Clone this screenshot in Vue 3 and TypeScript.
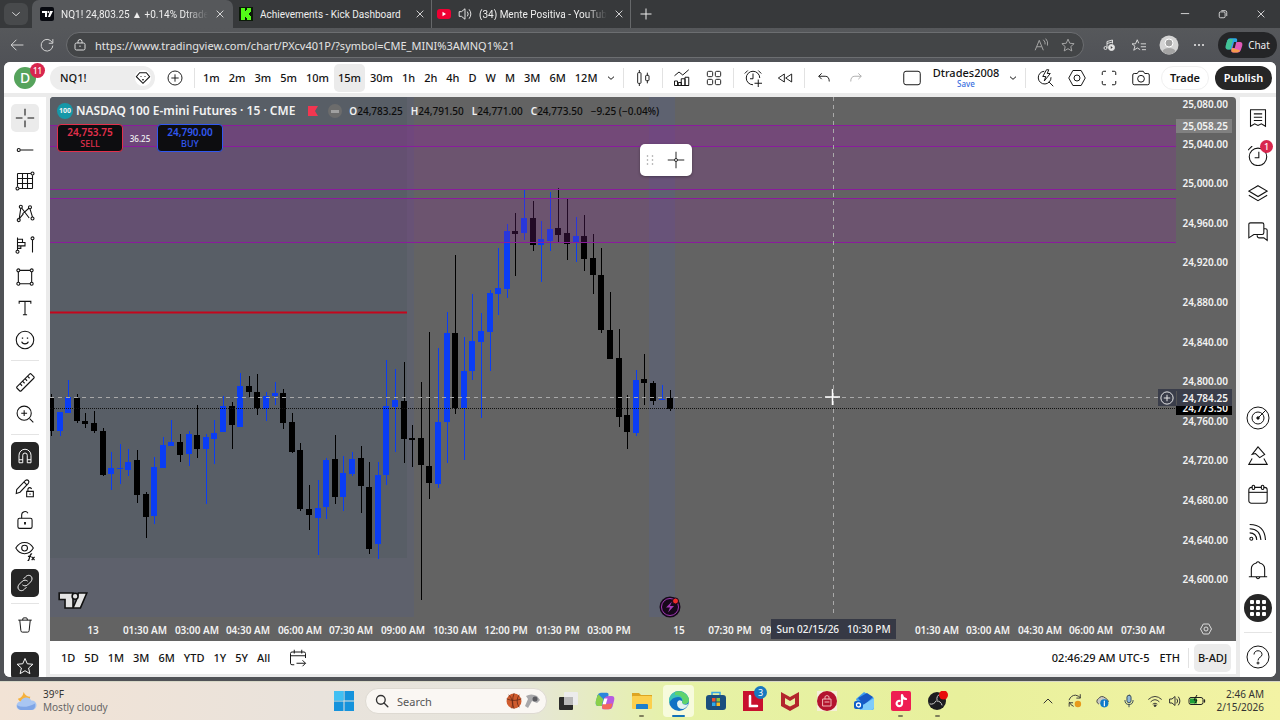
<script setup lang="ts">
type Candle = [number, number, number, number, 0 | 1]

const ORIGIN_X = 50
const ORIGIN_Y = 97
const STEP = 8.6

// wick top, body top, body bottom, wick bottom, rising
const series: Candle[] = [
  [394, 398, 431, 436, 0], [412, 412, 431, 436, 1], [380, 397, 413, 413, 1], [394, 398, 421, 423, 0],
  [413, 421, 424, 428, 0], [411, 423, 431, 433, 0], [428, 431, 475, 476, 0], [452, 468, 474, 490, 1],
  [444, 468, 469, 484, 1], [449, 462, 470, 476, 1], [450, 460, 495, 503, 0], [492, 494, 517, 538, 0],
  [457, 467, 516, 524, 1], [437, 445, 468, 468, 1], [420, 442, 446, 446, 1], [434, 442, 455, 462, 0],
  [431, 434, 454, 466, 1], [405, 435, 449, 458, 0], [434, 437, 449, 504, 1], [420, 433, 439, 464, 1],
  [396, 406, 432, 432, 1], [402, 406, 425, 449, 0], [373, 386, 427, 427, 1], [376, 386, 392, 397, 0],
  [374, 392, 408, 415, 0], [392, 396, 409, 421, 1], [382, 393, 396, 405, 1], [389, 393, 423, 429, 0],
  [413, 422, 452, 453, 0], [443, 450, 509, 511, 0], [485, 509, 515, 530, 0], [480, 508, 518, 555, 1],
  [458, 460, 507, 519, 1], [435, 459, 497, 504, 0], [456, 473, 497, 511, 1], [452, 459, 474, 476, 1],
  [446, 458, 486, 513, 0], [462, 487, 549, 554, 0], [462, 475, 544, 559, 1], [360, 406, 475, 485, 1],
  [369, 400, 407, 452, 1], [362, 401, 439, 463, 0], [425, 438, 440, 467, 0], [382, 438, 465, 600, 0],
  [332, 466, 483, 499, 0], [348, 422, 484, 488, 1], [312, 333, 422, 463, 1], [255, 333, 408, 414, 0],
  [337, 371, 408, 460, 1], [294, 341, 371, 380, 1], [313, 331, 342, 418, 1], [290, 293, 332, 371, 1],
  [248, 288, 294, 315, 1], [224, 231, 289, 298, 1], [213, 231, 234, 276, 0], [189, 218, 233, 240, 1],
  [201, 218, 245, 251, 0], [221, 239, 245, 282, 1], [192, 229, 241, 251, 1], [188, 228, 235, 243, 0],
  [199, 233, 244, 260, 0], [217, 236, 242, 262, 1], [215, 236, 259, 271, 0], [234, 258, 275, 294, 0],
  [248, 275, 330, 333, 0], [292, 330, 359, 359, 0], [329, 358, 417, 427, 0], [395, 415, 432, 449, 0],
  [370, 380, 433, 436, 1], [354, 379, 383, 405, 0], [381, 383, 401, 405, 0], [385, 399, 400, 400, 1],
  [390, 398, 409, 411, 0],
]
const candles = series.map(([wt, bt, bb, wb, up], i) => ({
  x: Math.round(51 + STEP * i) - ORIGIN_X,
  wt: wt - ORIGIN_Y,
  wh: wb - wt,
  bt: bt - ORIGIN_Y,
  bh: bb - bt,
  fill: up ? '#0a3df5' : '#000',
}))

const prices = ['25,080.00', '25,040.00', '25,000.00', '24,960.00', '24,920.00', '24,880.00', '24,840.00',
  '24,800.00', '24,760.00', '24,720.00', '24,680.00', '24,640.00', '24,600.00']
  .map((text, i) => ({ text, y: Math.round(11 + 39.6 * i) }))

const spread = (start: number, labels: string[]) =>
  labels.map((text, i) => ({ text, x: Math.round(start + 51.6 * i) - ORIGIN_X }))
const times = [
  ...spread(93.4, ['13', '01:30 AM', '03:00 AM', '04:30 AM', '06:00 AM', '07:30 AM', '09:00 AM', '10:30 AM',
    '12:00 PM', '01:30 PM', '03:00 PM']),
  ...spread(678.5, ['15', '07:30 PM', '09:00 PM']),
  ...spread(936.5, ['01:30 AM', '03:00 AM', '04:30 AM', '06:00 AM', '07:30 AM']),
]

const intervals = ['1m', '2m', '3m', '5m', '10m', '15m', '30m', '1h', '2h', '4h', 'D', 'W', 'M', '3M', '6M', '12M']
const ranges = ['1D', '5D', '1M', '3M', '6M', 'YTD', '1Y', '5Y', 'All']

// Stroke icons on a 24 unit grid
const icons: Record<string, string> = {
  cross: '<path d="M12 1v8M12 15v8M1 12h8M15 12h8"/>',
  trend: '<circle cx="4.500" cy="12" r="1.800"/><path d="M6.500 12H22"/>',
  fib: '<path d="M3 3h16M3 3v16M21 5v16M5 21h16M3 9h18M3 15h18M9 3v18M15 3v18"/><circle cx="21" cy="3" r="1.800"/><circle cx="3" cy="21" r="1.800"/>',
  pattern: '<path d="M5 19L7 6M8 6l9 12M9 13l8-7M18 7l3 10M5 19l5-6"/><circle cx="7" cy="4.500" r="1.800"/><circle cx="18" cy="5" r="1.800"/><circle cx="4.500" cy="20.500" r="1.800"/><circle cx="21" cy="18.500" r="1.800"/>',
  forecast: '<path d="M3 3v15M3 5h6v4H3M3 9h9v4H3M3 13h4v3H3M21 6v15"/><circle cx="3" cy="20" r="1.800"/><circle cx="21" cy="4" r="1.800"/>',
  shape: '<path d="M6 4h12M6 20h12M4 6v12M20 6v12"/><circle cx="4" cy="4" r="1.800"/><circle cx="20" cy="4" r="1.800"/><circle cx="4" cy="20" r="1.800"/><circle cx="20" cy="20" r="1.800"/>',
  text: '<path d="M5 7V4h14v3M12 4v16M9.500 20h5"/>',
  smile: '<circle cx="12" cy="12" r="10.500"/><path d="M8 14c1 3.500 7 3.500 8 0"/><path d="M9 9v1.500M15 9v1.500" stroke-width="1.600"/>',
  ruler: '<path d="M2.500 17.500l15-15q1-1 2 0l3 3q1 1 0 2l-15 15q-1 1-2 0l-3-3q-1-1 0-2zM6 14l2.500 2.500M9 11l2.500 2.500M12 8l2.500 2.500M15 5l2.500 2.500"/>',
  zoomin: '<circle cx="11" cy="11" r="8.500"/><path d="M17.500 17.500L22 22M11 7.500v7M7.500 11h7"/>',
  magnet: '<path d="M4 21V11a8 8 0 0 1 16 0v10h-5V11a3 3 0 0 0-6 0v10zM4 17h5M15 17h5"/>',
  pencilLock: '<path d="M2 14L12.500 3q2-1.500 3.500 0t0 3.500L6 17l-4.500 1.500zM11 5l3.500 3.500M14 16h8v6.500h-8zM15.500 16v-3q2-3 4.500 0M18 18.500v1.500"/>',
  lock: '<rect x="3.500" y="10" width="17" height="12" rx="2"/><path d="M8 10V6a4 4 0 0 1 7.500-2"/><path d="M12 14.500v3" stroke-width="2.200"/>',
  eye: '<path d="M1 8.500C6-.5 17-.5 22 8.500 17 17.500 6 17.500 1 8.500z"/><circle cx="11.500" cy="8.500" r="3.500"/><path d="M15 23.500c3 1 2-9 5.500-8M15.500 18.500h4M20 19l3.500 4M23.500 19L20 23" stroke-width="1.500"/>',
  link: '<path d="M10 6.500l3-3c3-3 6.500-1.500 7.500 0 1.500 2 1 5-1 7l-4 4c-2.500 2-5 1.500-7 0M14 17.500l-3 3c-3 3-6.500 1.500-7.500 0-1.500-2-1-5 1-7l4-4c2.500-2 5-1.500 7 0"/>',
  trash: '<path d="M3 5.500h18M5 5.500l1.500 14q.200 2 2 2h7q1.800 0 2-2l1.500-14M9 5.500V4q0-1.500 1.500-1.500h3Q15 2.500 15 4v1.500"/>',
  star: '<path d="M12 2l3 7 7.500.700-5.700 5 1.700 7.500L12 18.300l-6.500 3.900 1.700-7.500-5.700-5L9 9z"/>',
  list: '<path d="M3 2h18v20l-5-3-4 2-4-2-5 3zM7 7h10M7 11h10M7 15h10"/>',
  alarm: '<circle cx="12" cy="13" r="10.500"/><path d="M13 7v7H8M0 5l5-5"/>',
  layers: '<path d="M12 2l11 6.500L12 15 1 8.500zM1 13.500L12 20l11-6.500"/>',
  chat: '<path d="M3 1h14q2 0 2 2v10q0 2-2 2H7l-6 4V3q0-2 2-2zM19 8h2q2 0 2 2v12l-4-3h-6q-2 0-2-3"/>',
  target: '<circle cx="12" cy="12" r="11"/><circle cx="12" cy="12" r="6"/><path d="M12 12L20 4"/><circle cx="12" cy="12" r="1.200" fill="currentColor"/>',
  ideas: '<path d="M12 1L5 10l4-1 5 5 6-4zM5 15l-4 7h22l-4-7"/>',
  calendar: '<rect x="1" y="4" width="22" height="19" rx="3"/><path d="M1 10h22"/><rect x="5" y="1.500" width="3" height="5" rx="1.500" fill="#fff"/><rect x="16" y="1.500" width="3" height="5" rx="1.500" fill="#fff"/>',
  feed: '<circle cx="4" cy="20" r="1.800"/><path d="M2 13q8 0 8.500 8.500M2 8q12.500 0 13.500 13.500M2 3q18 0 19 18.500"/>',
  bell: '<path d="M1 20h22M4 20V11a8 7.500 0 0 1 6-7.500q2-3 4 0a8 7.500 0 0 1 6 7.500v9M9.500 20q2.500 5 5 0"/>',
  help: '<circle cx="12" cy="12" r="11"/><path d="M8 9.500c0-5 8-5 8 0 0 3-4 2.500-4 6"/><circle cx="12" cy="18" r="1"/>',
  plusCircle: '<circle cx="12" cy="12" r="10.500"/><path d="M12 6.500v11M6.500 12h11"/>',
  gem: '<path d="M7 4h10l5 6-10 10L2 10z"/><path d="M9 9v1M15 9v1M11 14l1 1 1-1" stroke-width="1.800"/>',
  candles: '<rect x="4" y="4" width="5" height="16" rx="1"/><rect x="16" y="8" width="5" height="8" rx="1"/><path d="M6.500 0v4M6.500 20v4M18.500 4v4M18.500 16v4"/>',
  indicators: '<path d="M2 9l6-5 5 4 8-7M2 22v-6h4v6M7 22v-4h4v4M11 22v-9h5v9M16 22V11h5v11zM2 22h19"/>',
  grid4: '<rect x="2" y="2" width="8" height="8" rx="2"/><rect x="14" y="2" width="8" height="8" rx="2"/><rect x="2" y="14" width="8" height="8" rx="2"/><rect x="14" y="14" width="8" height="8" rx="2"/>',
  alertAdd: '<path d="M21 12a9 9 0 1 0-9 9M12 6v7H8M1 6l4-4M19 2l4 4M19 14v10M14 19h10"/>',
  rewind: '<path d="M11 6v12l-9-6zM22 6v12l-9-6z"/>',
  undo: '<path d="M8 4L3 9l5 5M3 9h11q7 0 7 9"/>',
  redo: '<path d="M16 4l5 5-5 5M21 9H10q-7 0-7 9"/>',
  square: '<rect x="1" y="3" width="22" height="18" rx="3"/>',
  quick: '<path d="M11 3a8.500 8.500 0 1 0 9 8M17 17l6 6M14 1l-5 9h4l-2 6 8-10h-4l2-5z"/>',
  hex: '<path d="M6.500 2h11L23 12l-5.500 10h-11L1 12z"/><circle cx="12" cy="12" r="4"/>',
  full: '<path d="M3 8V5q0-2 2-2h3M16 3h3q2 0 2 2v3M21 16v3q0 2-2 2h-3M8 21H5q-2 0-2-2v-3"/>',
  camera: '<path d="M3 6h4l2-3h6l2 3h4q2 0 2 2v11q0 2-2 2H3q-2 0-2-2V8q0-2 2-2z"/><circle cx="12" cy="13" r="4.500"/>',
  chev: '<path d="M3 8l9 8 9-8"/>',
  chevUp: '<path d="M4 16l8-8 8 8"/>',
  goto: '<path d="M7 21H4q-2 0-2-2V6q0-2 2-2h16q2 0 2 2v6M2 9h20M7 1v5M17 1v5M10 19h12M18 15l4 4-4 4"/>',
  close: '<path d="M4 4l16 16M20 4L4 20"/>',
  plus: '<path d="M12 1v22M1 12h22"/>',
  min: '<path d="M2 11h20"/>',
  restore: '<rect x="3" y="7" width="14" height="14" rx="3"/><path d="M8 4h9q4 0 4 4v9"/>',
  back: '<path d="M23 12H2M11 3l-9 9 9 9"/>',
  reload: '<path d="M21 8A10 10 0 1 0 22 13M22 2v7h-7"/>',
  bagLock: '<rect x="2" y="8" width="20" height="14" rx="3"/><path d="M8 8V5a4 4 0 0 1 8 0v3M12 13v3"/>',
  speaker: '<path d="M2 8h4l6-5v18l-6-5H2zM16 8q3 4 0 8M19 4q6 8 0 16"/>',
  starLines: '<path d="M14 20l-5-3-6 4 2-7-5-4h6l3-7 2.500 6M15 10h9M15 15h9M17 20h7"/>',
  music: '<path d="M8 18V5l11-3v7M8 9l11-3"/><circle cx="5" cy="18" r="3"/><circle cx="17" cy="17" r="6" fill="#e8e8e8"/><path d="M15.500 14l4 3-4 3z" fill="#444" stroke="none"/>',
  readAloud: '<path d="M2 21L9 4l7 17M5 15h8M16 3q4 4 3 8M20 1q5 5 3 12"/>',
  search: '<circle cx="10" cy="10" r="7.500"/><path d="M15.500 15.500L22 22"/>',
  mic: '<rect x="8.500" y="2" width="7" height="13" rx="3.500" fill="#8fb8d8"/><path d="M5 11q0 7 7 7t7-7M12 18v4"/>',
  wifi: '<path d="M1 9q11-10 22 0M5 13q7-7 14 0M8.500 17q3.500-3 7 0"/><circle cx="12" cy="20" r="1.500" fill="currentColor"/>',
}

const leftGroups = [
  ['cross', 'trend', 'fib', 'pattern', 'forecast', 'shape', 'text', 'smile'],
  ['ruler', 'zoomin'],
  ['magnet', 'pencilLock', 'lock', 'eye', 'link'],
  ['trash'],
]
const dark = ['magnet', 'link']
const rightTop = ['list', 'alarm', 'layers', 'chat']
const rightBottom = ['target', 'ideas', 'calendar', 'feed', 'bell']
</script>

<template>
  <div class="screen">
    <header class="tabs">
      <button class="tab-menu" aria-label="Tab actions"><svg class="i10" viewBox="0 0 24 24" v-html="icons.chev"></svg></button>
      <div class="tab active">
        <svg class="fav" viewBox="0 0 14 14"><rect width="14" height="14" rx="2" fill="#080a10" /><path d="M2 4h5v6H5V6H2zM10 4h3l-3 6H8z" fill="#fff" /><circle cx="8.300" cy="5" r="1" fill="#fff" /></svg>
        <span class="tab-title">NQ1! 24,803.25 ▲ +0.14% Dtrade</span>
        <button class="x" aria-label="Close tab"><svg class="i10" viewBox="0 0 24 24" v-html="icons.close"></svg></button>
      </div>
      <div class="tab second">
        <svg class="fav" viewBox="0 0 14 14"><rect width="14" height="14" fill="#0b1a08" /><path d="M2 1h4v3h1V3h1V1h4v4h-1v1h-1v2h1v1h1v4H8v-2H7v-1H6v3H2z" fill="#53fc18" /></svg>
        <span class="tab-title">Achievements - Kick Dashboard</span>
        <button class="x" aria-label="Close tab"><svg class="i10" viewBox="0 0 24 24" v-html="icons.close"></svg></button>
      </div>
      <div class="tab third">
        <svg class="fav" viewBox="0 0 14 14"><rect y="2" width="14" height="10" rx="3" fill="#f00033" /><path d="M5.500 4.800v4.400l3.500-2.200z" fill="#fff" /></svg>
        <svg class="i14" viewBox="0 0 24 24" v-html="icons.speaker"></svg>
        <span class="tab-title">(34) Mente Positiva - YouTub</span>
        <button class="x" aria-label="Close tab"><svg class="i10" viewBox="0 0 24 24" v-html="icons.close"></svg></button>
      </div>
      <button class="new-tab" aria-label="New tab"><svg class="i12" viewBox="0 0 24 24" v-html="icons.plus"></svg></button>
      <div class="grow"></div>
      <button v-for="w in ['min', 'restore', 'close']" :key="w" class="win" :aria-label="w"><svg class="i10" viewBox="0 0 24 24" v-html="icons[w]"></svg></button>
    </header>

    <div class="address">
      <button class="nav" aria-label="Back"><svg class="i14" viewBox="0 0 24 24" v-html="icons.back"></svg></button>
      <button class="nav" aria-label="Reload"><svg class="i14" viewBox="0 0 24 24" v-html="icons.reload"></svg></button>
      <div class="url">
        <svg class="i12" viewBox="0 0 24 24" v-html="icons.bagLock"></svg>
        <input type="text" aria-label="Address" value="https://www.tradingview.com/chart/PXcv401P/?symbol=CME_MINI%3AMNQ1%21" />
        <svg class="i14 dim" viewBox="0 0 24 24" v-html="icons.readAloud"></svg>
        <svg class="i14 dim" viewBox="0 0 24 24" v-html="icons.star"></svg>
      </div>
      <button class="ext" aria-label="Media"><svg class="i12" viewBox="0 0 24 24" v-html="icons.music"></svg></button>
      <button class="ext" aria-label="Favorites"><svg class="i14" viewBox="0 0 24 24" v-html="icons.starLines"></svg></button>
      <button class="ext" aria-label="Profile"><svg class="i20" viewBox="0 0 20 20"><circle cx="10" cy="10" r="9.500" fill="#d4d4d4" stroke="none" /><circle cx="10" cy="8" r="4" fill="#a4a4a4" stroke="#fff" stroke-width="1" /><path d="M3.500 16c2-4 11-4 13 0-3 4.500-10 4.500-13 0z" fill="#a4a4a4" stroke="none" /></svg></button>
      <button class="ext" aria-label="More"><svg class="i12" viewBox="0 0 12 12"><circle cx="2" cy="6" r="1" fill="#eee" stroke="none" /><circle cx="6" cy="6" r="1" fill="#eee" stroke="none" /><circle cx="10" cy="6" r="1" fill="#eee" stroke="none" /></svg></button>
      <button class="copilot">
        <svg class="i18" viewBox="0 0 24 24"><g stroke="none"><path d="M7 3h7q3 0 2 4l-3 8q-1 3-5 3H4q-4 0-3-5l2-7q1-3 4-3z" fill="#2aa7e8" /><path d="M5 4q-2 1-3 5l-1 4q-1 5 3 5h3l4-14z" fill="#4fcf72" opacity=".7" /><path d="M17 8h3q4 0 3 5l-2 6q-1 3-4 3h-6q-4 0-2-5l2-6q1-3 6-3z" fill="#e05ab8" /><path d="M9 16q-2 6 3 6h4q3 0 4-3z" fill="#f79a4c" /><path d="M12 8h3l-2 8h-3z" fill="#242527" /></g></svg>
        Chat
      </button>
    </div>

    <main class="app">
      <div class="topbar">
        <button class="avatar" aria-label="Account, 11 notifications">D<span class="badge">11</span></button>
        <button class="symbol">NQ1!<svg class="i14 gem" viewBox="0 0 24 24" v-html="icons.gem"></svg></button>
        <button class="tool add" aria-label="Compare"><svg class="i16" viewBox="0 0 24 24" v-html="icons.plusCircle"></svg></button>
        <span class="sep"></span>
        <div class="intervals">
          <button v-for="t in intervals" :key="t" :class="{ on: t === '15m' }">{{ t }}</button>
        </div>
        <button class="narrow" aria-label="More intervals"><svg class="i8" viewBox="0 0 24 24" v-html="icons.chev"></svg></button>
        <span class="sep"></span>
        <button class="tool" aria-label="Candles"><svg class="i16" viewBox="0 0 24 24" v-html="icons.candles"></svg></button>
        <span class="sep"></span>
        <button class="tool" aria-label="Indicators"><svg class="i18" viewBox="0 0 24 24" v-html="icons.indicators"></svg></button>
        <button class="tool" aria-label="Templates"><svg class="i16" viewBox="0 0 24 24" v-html="icons.grid4"></svg></button>
        <span class="sep"></span>
        <button class="tool" aria-label="Create alert"><svg class="i18" viewBox="0 0 24 24" v-html="icons.alertAdd"></svg></button>
        <button class="tool" aria-label="Replay"><svg class="i16" viewBox="0 0 24 24" v-html="icons.rewind"></svg></button>
        <span class="sep"></span>
        <button class="tool" aria-label="Undo"><svg class="i14" viewBox="0 0 24 24" v-html="icons.undo"></svg></button>
        <button class="tool faded" aria-label="Redo"><svg class="i14" viewBox="0 0 24 24" v-html="icons.redo"></svg></button>
        <div class="grow"></div>
        <button class="tool" aria-label="Layout"><svg class="i18" viewBox="0 0 24 24" v-html="icons.square"></svg></button>
        <div class="layout-name"><span>Dtrades2008</span><button class="save">Save</button></div>
        <button class="narrow" aria-label="Manage layouts"><svg class="i8" viewBox="0 0 24 24" v-html="icons.chev"></svg></button>
        <span class="sep"></span>
        <button v-for="n in ['quick', 'hex', 'full', 'camera']" :key="n" class="tool" :aria-label="n"><svg class="i18" viewBox="0 0 24 24" v-html="icons[n]"></svg></button>
        <button class="trade">Trade</button>
        <button class="publish">Publish</button>
      </div>

      <div class="work">
        <nav class="left">
          <template v-for="(g, gi) in leftGroups" :key="gi">
            <div class="lgroup" :class="'g' + gi">
              <button v-for="n in g" :key="n" :aria-label="n" :class="{ sel: n === 'cross', dark: dark.includes(n) }"><svg :class="n === 'magnet' || n === 'link' || n === 'trash' ? 'i18' : 'i20'" viewBox="0 0 24 24" v-html="icons[n]"></svg></button>
            </div>
            <hr v-if="gi < 3" />
          </template>
          <button class="dark starred" aria-label="Favorite tools"><svg class="i18" viewBox="0 0 24 24" v-html="icons.star"></svg></button>
        </nav>

        <section class="center">
          <div class="chart">
            <svg class="pane" role="img" aria-label="NASDAQ 100 E-mini Futures candles">
              <rect width="364" height="521" fill="#5e616c" />
              <rect width="357" height="461" fill="#585e66" />
              <rect x="599" width="26" height="521" fill="#5e6270" />
              <path d="M0 215.500H357" stroke="#c4061c" stroke-width="2" />
              <g v-for="(c, i) in candles" :key="i" :fill="c.fill">
                <rect :x="c.x" :y="c.wt" width="1" :height="c.wh" />
                <rect :x="c.x - 3" :y="c.bt" width="6" :height="c.bh" />
              </g>
              <g class="zones">
                <rect width="100%" y="29" height="21" />
                <rect width="100%" y="29" height="63" />
                <rect width="100%" y="102" height="43" />
              </g>
              <g class="levels">
                <line v-for="y in [28.5, 49.5, 92.5, 101.5, 145.5]" :key="y" x1="0" x2="100%" :y1="y" :y2="y" />
              </g>
              <line x1="0" x2="100%" y1="311.500" y2="311.500" stroke="#111" stroke-dasharray="1 1" />
              <line x1="0" x2="100%" y1="300.500" y2="300.500" stroke="#a9a9a9" stroke-dasharray="4 4" />
              <line x1="783.500" x2="783.500" y1="0" y2="100%" stroke="#a9a9a9" stroke-dasharray="4 4" />
              <path d="M782.500 292v16M775 300h15" stroke="#fff" stroke-width="1.500" />
            </svg>
            <svg class="prices">
              <rect y="22" width="56" height="14" fill="#808080" />
              <text v-for="p in prices" :key="p.text" x="52" :y="p.y" text-anchor="end">{{ p.text }}</text>
              <text x="52" y="33" text-anchor="end">25,058.25</text>
              <rect y="304" width="56" height="14" fill="#000" />
              <text x="52" y="315" text-anchor="end">24,773.50</text>
            </svg>
            <svg class="times">
              <text v-for="(t, i) in times" :key="i" :x="t.x" y="17" text-anchor="middle">{{ t.text }}</text>
            </svg>
            <button class="axis-set" aria-label="Axis settings"><svg class="i12" viewBox="0 0 24 24" v-html="icons.hex"></svg></button>

            <div class="cross-price"><button aria-label="Add at price"><svg class="i14" viewBox="0 0 24 24" v-html="icons.plusCircle"></svg></button><span>24,784.25</span></div>
            <div class="cross-time"><span>Sun 02/15/26</span><span>10:30 PM</span></div>

            <div class="legend">
              <span class="hundred">100</span>
              <h1>NASDAQ 100 E-mini Futures · 15 · CME</h1>
              <svg class="flag" viewBox="0 0 10 10"><path d="M0 0h10L7 5l3 5H0z" fill="#f23650" stroke="none" /></svg>
              <span class="dash"></span>
              <p class="ohlc">
                <span><b>O</b>24,783.25</span><span><b>H</b>24,791.50</span><span><b>L</b>24,771.00</span><span><b>C</b>24,773.50</span><span>−9.25 (−0.04%)</span>
              </p>
            </div>
            <div class="quotes">
              <button class="sell"><strong>24,753.75</strong>SELL</button>
              <span>36.25</span>
              <button class="buy"><strong>24,790.00</strong>BUY</button>
            </div>
            <div class="floating">
              <svg class="grip" viewBox="0 0 8 12"><g fill="#999" stroke="none"><circle v-for="k in 6" :key="k" :cx="k % 2 ? 1.5 : 6.5" :cy="Math.ceil(k / 2) * 4 - 2" r="0.800" /></g></svg>
              <button aria-label="Cross tool"><svg class="i18" viewBox="0 0 24 24"><path d="M12 1v9M12 14v9M1 12h9M14 12h9" /><circle cx="12" cy="12" r="2" /></svg></button>
            </div>
            <svg class="tv" viewBox="0 0 28 16"><path d="M1 1h13v14H6.500V7H1zM19 1h8l-6 14h-7l3-7z" fill="#e4e4e4" stroke="#111" stroke-width="1.500" /><circle cx="16" cy="4" r="2.800" fill="#e4e4e4" stroke="#111" stroke-width="1.500" /></svg>
            <svg class="bolt" viewBox="0 0 22 22"><circle cx="11" cy="11" r="9" fill="#16081a" stroke="#16081a" stroke-width="3" /><circle cx="11" cy="11" r="8.500" stroke="#a03ab4" stroke-width="1" /><path d="M13 5.500l-6 6h4l-2 5 6-6.500h-4z" fill="#a03ab4" stroke="none" /><circle cx="16.500" cy="5" r="3" fill="#ee2b2b" stroke="#16081a" stroke-width="1" /></svg>
          </div>

          <div class="bottombar">
            <button v-for="r in ranges" :key="r" class="range">{{ r }}</button>
            <button class="goto" aria-label="Go to date"><svg class="i18" viewBox="0 0 24 24" v-html="icons.goto"></svg></button>
            <div class="grow"></div>
            <button class="clock">02:46:29 AM UTC-5</button>
            <button class="eth">ETH</button>
            <span class="sep"></span>
            <button class="badj">B-ADJ</button>
          </div>
        </section>

        <aside class="right">
          <button v-for="n in rightTop" :key="n" :aria-label="n"><svg class="i20" viewBox="0 0 24 24" v-html="icons[n]"></svg><span v-if="n === 'alarm'" class="one">1</span></button>
          <div class="grow"></div>
          <button v-for="n in rightBottom" :key="n" :aria-label="n"><svg :class="n === 'target' ? 'i24' : 'i20'" viewBox="0 0 24 24" v-html="icons[n]"></svg></button>
          <button class="apps" aria-label="Products"><svg class="i16" viewBox="0 0 16 16"><rect v-for="k in 9" :key="k" :x="((k - 1) % 3) * 6" :y="Math.floor((k - 1) / 3) * 6" width="4" height="4" rx="1" fill="#fff" stroke="none" /></svg></button>
          <hr />
          <button aria-label="Help"><svg class="i24" viewBox="0 0 24 24" v-html="icons.help"></svg></button>
        </aside>
      </div>
    </main>

    <footer class="taskbar">
      <button class="weather">
        <svg class="sky" viewBox="0 0 22 22"><path d="M8 1q2 5 7 5-1 6-7 6-5-1-6-4 5-1 6-7z" fill="#f6b13c" /><path d="M5 20a4.500 4.500 0 0 1 0-9 6 6 0 0 1 11-1 5 5 0 0 1 1 10z" fill="#a9c6f2" /><path d="M5 20q-4-1-4-5 8 4 19-2 1 6-4 7z" fill="#7fa5e6" /></svg>
        <span>39°F<small>Mostly cloudy</small></span>
      </button>
      <div class="dock">
        <button class="start" aria-label="Start"><svg viewBox="0 0 20 20"><path d="M0 0h9.500v9.500H0zM10.500 0H20v9.500h-9.500zM0 10.500h9.500V20H0zM10.500 10.500H20V20h-9.500z" fill="#1593dc" /><path d="M0 0h9.500v9.500H0z" fill="#41c0f3" /></svg></button>
        <div class="search">
          <svg class="i14" viewBox="0 0 24 24" v-html="icons.search"></svg>
          <input type="text" placeholder="Search" aria-label="Search" />
          <svg class="ball" viewBox="0 0 34 16"><circle cx="8" cy="8" r="7.500" fill="#cf5c2e" /><path d="M1 6q7 3 14 0M8 .500q-3 8 0 15M3 2q5 5 3 13M13 2q-4 6 0 12" fill="none" stroke="#5a2414" stroke-width=".7" /><path d="M20 3q5-3 11 0l3 4-3 3-5-2-4 7-3-2 3-7z" fill="#a8a8aa" /><circle cx="29" cy="6" r="2.500" fill="#5b5b60" /></svg>
        </div>
        <button class="dk" aria-label="Task view"><svg viewBox="0 0 20 20"><rect x="1" y="6" width="14" height="13" rx="1" fill="#2b2b2b" /><rect x="6" y="1" width="14" height="13" rx="1" fill="#ececec" /><rect x="6" y="6" width="9" height="8" fill="#b9b9b9" /></svg></button>
        <button class="dk" aria-label="Copilot"><svg viewBox="0 0 24 24"><path d="M7 2h7q3 0 2 4l-3 9q-1 3-5 3H4q-4 0-3-5l2-8q1-3 4-3z" fill="#2b86dd" /><path d="M4 4Q2 7 1 12q-1 6 3 6h4l2-8z" fill="#8ad04a" /><path d="M17 6h3q4 0 3 5l-2 8q-1 3-4 3h-6q-4 0-2-5l2-8q1-3 6-3z" fill="#b75be0" /><path d="M9 16q-2 6 3 6h4q3 0 4-3l1-4z" fill="#f4695d" /><path d="M11 9h4l-2 7H9z" fill="#fff" /></svg></button>
        <button class="dk run" aria-label="File Explorer"><svg viewBox="0 0 20 20"><path d="M0 2h7l2 2h11v4H0z" fill="#dda522" /><rect y="5" width="20" height="13" rx="1" fill="#fbcf4d" /><path d="M4 18v-4q0-1 1-1h10q1 0 1 1v4z" fill="#1c7fcb" /></svg></button>
        <button class="dk open" aria-label="Edge"><svg viewBox="0 0 20 20"><circle cx="10" cy="10" r="10" fill="#1272c4" /><path d="M0 9C1-2 17-3 20 8c0 6-6 6-7 4 1-3 0-6-4-6S2 8 0 12z" fill="#3fc4b4" /><path d="M6 1Q15-2 20 8c0 6-6 6-7 4 2-5-1-8-7-8z" fill="#60d36c" /><path d="M13 12q2 3 6.500 1-2 4-5.500 5-6 0-6-6 1-4 5-2z" fill="#e4f3f0" /></svg></button>
        <button class="dk" aria-label="Store"><svg viewBox="0 0 20 20"><path d="M6 5V1.500h8V5" fill="none" stroke="#38a8e4" stroke-width="1.500" /><rect y="4" width="20" height="15" rx="3" fill="#1b4f7e" /><path d="M6 7h3.500v3.500H6z" fill="#f05030" /><path d="M10.500 7H14v3.500h-3.500z" fill="#8cc63f" /><path d="M6 11.500h3.500V15H6z" fill="#2ea8ea" /><path d="M10.500 11.500H14V15h-3.500z" fill="#fdbb21" /></svg></button>
        <button class="dk" aria-label="L app, 3 notifications"><svg viewBox="0 0 20 20"><rect width="20" height="20" fill="#c8102e" /><path d="M7 5v10h7" fill="none" stroke="#fff" stroke-width="2.500" /></svg><span class="three">3</span></button>
        <button class="dk" aria-label="McAfee"><svg viewBox="0 0 20 20"><path d="M1 1l9 5 9-5v14l-9 5-9-5zM5 7v6l5 2.500 5-2.500V7l-5 3z" fill="#b3262c" fill-rule="evenodd" /></svg></button>
        <button class="dk" aria-label="Shopping"><svg viewBox="0 0 20 20"><rect width="20" height="20" fill="#f5efd8" /><circle cx="10" cy="10" r="10" fill="#b3132e" /><path d="M6 8h8v7H6zM8 8V5.500q2-2 4 0V8M8 11h4" fill="none" stroke="#f0b8b8" stroke-width="1" /></svg></button>
        <button class="dk" aria-label="Outlook"><svg viewBox="0 0 20 20"><path d="M2 8l8-7 10 6v10q0 2-3 2H6z" fill="#3f9ff0" /><path d="M4 7l9-5 6 4-9 8z" fill="#1858c4" /><path d="M9 14l11-7v9q0 3-3 3H6z" fill="#7ecbfa" /><rect y="10" width="9" height="8" rx="2" fill="#0f5fc8" /><circle cx="4.500" cy="14" r="2" fill="none" stroke="#fff" stroke-width="1.300" /></svg></button>
        <button class="dk run" aria-label="TikTok"><svg viewBox="0 0 20 20"><rect width="20" height="20" rx="2" fill="#ee1d52" /><path d="M11 4v8.500a2.700 2.700 0 1 1-2.500-2.700M11 4q.500 3.500 4 4" fill="none" stroke="#fff" stroke-width="2.200" /></svg></button>
        <button class="dk run" aria-label="OBS"><svg viewBox="0 0 20 20"><circle cx="9" cy="10" r="9" fill="#1c1c20" /><path d="M9 9q-1-4 3-6M9 10q4 0 5 4M8 10q-2 4-6 3" fill="none" stroke="#ccc" stroke-width="1" /><circle cx="15.500" cy="4" r="4.500" fill="#e80c0c" /></svg></button>
      </div>
      <div class="tray">
        <button aria-label="Hidden icons"><svg class="i12" viewBox="0 0 24 24" v-html="icons.chevUp"></svg></button>
        <button aria-label="Sync"><svg class="i14" viewBox="0 0 24 24"><path d="M2 10q3-8 11-8 5 1 8 4M21 1v6h-6M2 14q2 5 7 7M2 21v-6h6" /><circle cx="17" cy="17" r="5.500" fill="#e79a1c" stroke="none" /></svg></button>
        <button aria-label="OneDrive"><svg class="i14" viewBox="0 0 24 24"><path d="M6 17a5 5 0 0 1 0-9q5-7 12-1 5 3 5 6" fill="#c8c8c0" stroke="#444" /><circle cx="16" cy="16" r="7" fill="#0f7ac8" stroke="none" /><path d="M16 15v5M16 12v1.500" stroke="#fff" stroke-width="2" /></svg></button>
        <button aria-label="Microphone" class="mic"><svg class="i14" viewBox="0 0 24 24" v-html="icons.mic"></svg></button>
        <button class="system" aria-label="Network, volume and battery">
          <svg class="i14" viewBox="0 0 24 24" v-html="icons.wifi"></svg>
          <svg class="i12" viewBox="0 0 24 24" v-html="icons.speaker"></svg>
          <svg class="batt" viewBox="0 0 18 12"><rect x="1" y="2.500" width="14" height="7" rx="2" fill="none" stroke="#222" stroke-width="1" /><rect x="2" y="3.500" width="7" height="5" fill="#1fa03a" stroke="none" /><path d="M16.500 5v2" stroke="#222" /><path d="M9 0L6 5h3L7 8" stroke="#111" fill="none" stroke-width="1" /></svg>
        </button>
        <button class="date"><span>2:46 AM</span><span>2/15/2026</span></button>
      </div>
    </footer>
  </div>
</template>

<style>
html, body { margin: 0; }
</style>

<style scoped>
.screen, .screen * { box-sizing: border-box; }
.screen { display: flex; flex-direction: column; min-height: 100vh; background: #505256; font-family: "Noto Sans", "Open Sans", sans-serif; font-size: 11px; color: #131313; }
button { border: 0; padding: 0; margin: 0; background: none; color: inherit; font: inherit; display: flex; align-items: center; justify-content: center; flex: none; white-space: nowrap; }
input { border: 0; padding: 0; background: none; font: inherit; color: inherit; min-width: 0; outline: 0; }
svg { display: block; flex: none; fill: none; stroke: currentColor; stroke-width: 1.3; }
.grow { flex: 1; }
.i8 { width: 8px; height: 8px; stroke-width: 3; }
.i10 { width: 10px; height: 10px; stroke-width: 2; }
.i12 { width: 12px; height: 12px; stroke-width: 2; }
.i14 { width: 14px; height: 14px; stroke-width: 1.6; }
.i16 { width: 16px; height: 16px; stroke-width: 1.4; }
.i18 { width: 18px; height: 18px; }
.i20 { width: 20px; height: 20px; }
.i24 { width: 24px; height: 24px; stroke-width: 1; }

.tabs { display: flex; align-items: center; height: 28px; background: #37393b; color: #eee; }
.tab-menu { width: 24px; height: 22px; margin: 0 4px; border-radius: 6px; background: #484a4c; }
.tab { display: flex; align-items: center; gap: 7px; height: 28px; }
.tab.active { width: 201px; padding: 0 8px; background: #56585b; border-radius: 7px 7px 0 0; }
.tab.second { width: 199px; padding: 0 6px; border-right: 1px solid #66686a; }
.tab.third { width: 199px; padding: 0 6px 0 5px; border-right: 1px solid #66686a; }
.tab.active .tab-title, .tab.third .tab-title { -webkit-mask-image: linear-gradient(90deg, #000 84%, transparent); mask-image: linear-gradient(90deg, #000 84%, transparent); }
.tab-title { flex: 1; overflow: hidden; white-space: nowrap; font-family: Roboto, "Noto Sans", sans-serif; font-size: 10px; }
.fav { width: 14px; height: 14px; stroke: none; }
.new-tab { width: 30px; height: 28px; }
.win { width: 38px; height: 28px; }

.address { display: flex; align-items: center; height: 34px; background: linear-gradient(#56585b, #505257); color: #ddd; padding: 0 3px 0 2px; }
.nav { width: 30px; height: 28px; }
.url { flex: 1; display: flex; align-items: center; gap: 9px; height: 26px; margin-left: 4px; margin-right: 10px; padding: 0 8px 0 7px; border: 1px solid #6c6e71; border-radius: 13px; background: #434547; }
.url input { flex: 1; font-size: 11px; color: #e4e4e4; }
.url .dim + .dim { margin-left: 4px; }
.dim { color: #aaa; }
.ext { width: 30px; height: 28px; }
.copilot { gap: 5px; width: 59px; height: 26px; margin-left: 4px; border-radius: 13px; background: #242527; color: #eee; font-size: 10px; }

.app { flex: 1; display: flex; flex-direction: column; margin: 0 4px 4px; background: #ebebeb; border-radius: 6px; overflow: hidden; font-weight: 500; }
.topbar { display: flex; align-items: center; height: 31px; padding: 0 4px 0 10px; background: #fff; margin-bottom: 4px; }
.avatar { position: relative; width: 22px; height: 22px; border-radius: 11px; background: #56a35c; color: #fff; font-size: 14px; }
.badge { position: absolute; left: 16px; top: -4px; width: 15px; height: 15px; line-height: 15px; border-radius: 8px; background: #d8264e; color: #fff; font-size: 8px; text-align: center; }
.symbol { justify-content: space-between; width: 105px; height: 24px; margin-left: 14px; padding: 0 4px 0 10px; border-radius: 12px; background: #ededed; font-weight: 500; }
.gem { background: #fff; width: 16px; height: 16px; border-radius: 8px; }
.tool { width: 32px; height: 28px; }
.add { margin-left: 4px; }
.faded { color: #aaa; }
.sep { width: 1px; height: 20px; margin: 0 3px; background: #e2e2e2; flex: none; }
.intervals { display: flex; gap: 1px; margin-left: 1px; }
.intervals button { height: 28px; padding: 0 4px; border-radius: 5px; }
.intervals .on { background: #ebebeb; }
.narrow { width: 18px; height: 28px; }
.layout-name { display: flex; flex-direction: column; align-items: center; width: 76px; line-height: 12px; }
.save { color: #3a6fe0; font-size: 8px; line-height: 9px; }
.trade { width: 48px; height: 24px; margin-left: 4px; border: 1px solid #f0f0f0; border-radius: 12px; font-weight: 600; }
.publish { width: 57px; height: 24px; margin-left: 6px; border-radius: 12px; background: #262626; color: #fff; font-weight: 600; }

.work { flex: 1; display: grid; grid-template-columns: 42px 1fr 36px; gap: 4px; min-height: 0; }
.left { display: flex; flex-direction: column; align-items: center; padding-top: 7px; background: #fff; overflow: hidden; height: 580px; min-height: 100%; }
.lgroup { display: flex; flex-direction: column; justify-content: space-between; flex: none; }
.g0 { height: 250px; }
.g1 { height: 60px; }
.g2 { height: 155px; }
.left button { width: 28px; height: 28px; border-radius: 5px; }
.left .sel { background: #ebebeb; }
.left .dark { background: #262626; color: #fff; }
.left .starred { margin-top: 13px; }
hr { width: 28px; height: 1px; margin: 6px 0 7px; border: 0; background: #e4e4e4; flex: none; }
.right { display: flex; flex-direction: column; align-items: center; gap: 10px; padding: 7px 0 6px; background: #fff; }
.right button { position: relative; width: 28px; height: 28px; }
.right hr { margin: 0; }
.one { position: absolute; left: 16px; top: -2px; width: 13px; height: 13px; line-height: 13px; border-radius: 7px; background: #d8264e; color: #fff; font-size: 9px; text-align: center; }
.right .apps { border-radius: 14px; background: #262626; }

.center { display: flex; flex-direction: column; min-width: 0; padding-bottom: 3px; }
.chart { position: relative; flex: 1; display: grid; grid-template: 1fr 24px / 1fr 60px; background: #636363; border-radius: 4px 4px 0 0; overflow: hidden; color: #f2f2f2; }
.pane, .prices, .times { width: 100%; height: 100%; overflow: hidden; stroke: none; stroke-width: 1; }
.chart text { fill: #f2f2f2; font-size: 10px; font-weight: 600; }
.zones { fill: #872793; fill-opacity: .25; }
.levels { stroke: #8a1c9c; stroke-width: 1; }
.axis-set { color: #ddd; }
.cross-price { position: absolute; right: 4px; top: 292px; display: flex; align-items: center; height: 17px; background: #3a3d4a; font-size: 10px; font-weight: 600; }
.cross-price button { width: 18px; height: 17px; }
.cross-price span { width: 56px; padding-right: 4px; text-align: right; border-left: 1px solid #555; }
.cross-time { position: absolute; left: 721px; bottom: 2px; display: flex; justify-content: center; align-items: center; gap: 8px; width: 125px; height: 20px; background: #363945; font-size: 10px; }

.legend { position: absolute; left: 7px; top: 6px; display: flex; align-items: center; height: 16px; white-space: nowrap; }
.hundred { width: 16px; height: 16px; line-height: 16px; border-radius: 8px; background: #1698a8; font-size: 7px; font-weight: 700; text-align: center; }
h1 { margin: 0 13px 0 3px; font-size: 12px; font-weight: 600; line-height: 16px; }
.flag { width: 10px; height: 10px; }
.dash { width: 14px; height: 14px; margin: 0 7px 0 10px; border-radius: 7px; background: linear-gradient(#a0a0a0, #a0a0a0) center / 8px 3px no-repeat #6c6c6c; }
.ohlc { display: flex; gap: 8px; margin: 0; color: #0c0c0c; font-size: 10px; }
.ohlc b { color: #f2f2f2; font-weight: 600; }
.quotes { position: absolute; left: 7px; top: 27px; display: flex; align-items: center; font-size: 9px; }
.quotes > span { width: 34px; text-align: center; font-size: 8px; }
.quotes button { flex-direction: column; width: 66px; height: 28px; border: 1px solid; border-radius: 4px; background: #0d0d10; line-height: 11px; }
.quotes strong { font-size: 10px; font-weight: 600; }
.sell { color: #e2304c; }
.buy { color: #3158f0; }
.floating { position: absolute; left: 590px; top: 47px; display: flex; align-items: center; width: 52px; height: 32px; padding-left: 6px; border-radius: 5px; background: #fff; color: #222; box-shadow: 0 1px 3px #0005; }
.grip { width: 8px; height: 12px; }
.floating button { width: 28px; height: 28px; margin-left: 8px; }
.tv { position: absolute; left: 8px; bottom: 32px; width: 30px; height: 17px; }
.bolt { position: absolute; left: 609px; bottom: 23px; width: 22px; height: 22px; }

.bottombar { display: flex; align-items: center; height: 33px; padding: 0 5px 0 7px; background: #fff; }
.range { height: 24px; padding: 0 4px; margin-right: 1px; }
.goto { margin-left: 14px; }
.clock { margin-right: 10px; }
.bottombar .sep { margin: 0 5px 0 8px; }
.badj { height: 28px; width: 37px; border-radius: 5px; background: #ebebeb; }

.taskbar { display: grid; grid-template-columns: 1fr auto 1fr; align-items: center; height: 39px; border-top: 1px solid #d8d8c8; background: linear-gradient(90deg, #f2e3d5 0, #e9e3dc 25%, #e6e5dc 40%, #e6f2a6 53%, #e8f09c 75%, #f3f3a4 100%); color: #333; }
.taskbar svg { stroke-linecap: round; }
.weather { justify-self: start; gap: 6px; margin-left: 16px; }
.sky { width: 21px; height: 21px; stroke: none; }
.weather span { display: flex; flex-direction: column; text-align: left; font-size: 10px; line-height: 13px; }
.weather small { font-size: 10px; color: #666; }
.dock { display: flex; align-items: center; margin-left: 8px; }
.start { width: 24px; height: 32px; margin-right: 9px; }
.start svg, .dk svg { width: 20px; height: 20px; stroke: none; }
.search { display: flex; align-items: center; gap: 8px; width: 182px; height: 26px; margin-right: 2px; padding: 0 6px 0 9px; border: 1px solid #dedad2; border-radius: 13px; background: #faf7f3; }
.search input { flex: 1; font-size: 11px; }
.search input::placeholder { color: #555; opacity: 1; }
.search .i14 { stroke-width: 2.3; }
.ball { width: 34px; height: 16px; stroke: none; }
.dk { position: relative; width: 31px; height: 32px; margin: 0 3px; border-radius: 4px; }
.dk.open { background: #f7fbdc; }
.dk.run::after, .dk.open::after { content: ""; position: absolute; bottom: 0; left: 13px; width: 5px; height: 2px; border-radius: 1px; background: #80805c; }
.dk.open::after { left: 9px; width: 13px; background: #1272b8; }
.three { position: absolute; left: 17px; top: 1px; width: 13px; height: 13px; line-height: 13px; border-radius: 7px; background: #1878c0; color: #fff; font-size: 9px; text-align: center; }
.tray { display: flex; align-items: center; justify-self: end; padding-right: 16px; }
.tray > button { width: 27px; height: 30px; }
.tray .mic { color: #345; }
.tray .system { gap: 7px; width: 66px; padding-left: 4px; }
.batt { width: 18px; height: 12px; }
.tray .date { flex-direction: column; align-items: flex-end; width: 56px; line-height: 13px; font-size: 10px; }
</style>
